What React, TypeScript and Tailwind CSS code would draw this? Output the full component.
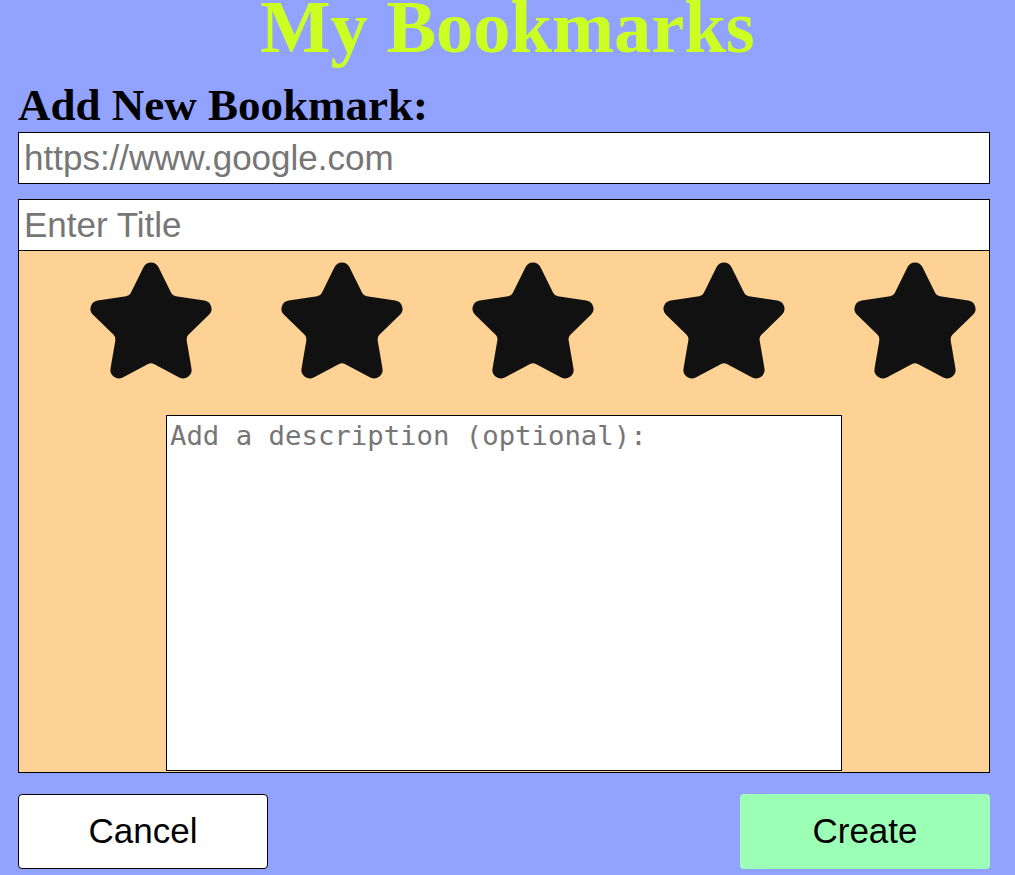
import React from "react";

const StarIcon = () => (
  <svg
    width="132"
    height="132"
    viewBox="0 0 24 24"
    fill="#111111"
    stroke="#111111"
    strokeWidth="2"
    strokeLinecap="round"
    strokeLinejoin="round"
    className="shrink-0"
  >
    <path d="M11.525 2.295a.53.53 0 0 1 .95 0l2.31 4.679a2.123 2.123 0 0 0 1.595 1.16l5.166.756a.53.53 0 0 1 .294.904l-3.736 3.638a2.123 2.123 0 0 0-.611 1.878l.882 5.14a.53.53 0 0 1-.771.56l-4.618-2.428a2.122 2.122 0 0 0-1.973 0L6.396 21.01a.53.53 0 0 1-.77-.56l.881-5.139a2.122 2.122 0 0 0-.611-1.879L2.16 9.795a.53.53 0 0 1 .294-.906l5.165-.755a2.122 2.122 0 0 0 1.597-1.16z" />
  </svg>
);

export default function App() {
  return (
    <div className="min-h-screen overflow-hidden bg-[#92a2ff]">
      <h1 className="text-center font-['Liberation_Serif',serif] text-[74.5px] font-bold leading-[54px] text-[#ccff22]">
        My Bookmarks
      </h1>
      <div className="ml-[18px] w-[972px]">
        <h2 className="mb-[4px] mt-[28px] font-['Liberation_Serif',serif] text-[45px] font-bold leading-[46px] text-black">
          Add New Bookmark:
        </h2>
        <input
          type="text"
          placeholder="https://www.google.com"
          className="block h-[52px] w-full border border-black bg-white px-[5px] font-['Liberation_Sans',sans-serif] text-[35px] text-black outline-none placeholder:text-[#767676]"
        />
        <input
          type="text"
          placeholder="Enter Title"
          className="mt-[15px] block h-[52px] w-full border border-black bg-white px-[5px] font-['Liberation_Sans',sans-serif] text-[35px] text-black outline-none placeholder:text-[#767676]"
        />
        <div className="h-[522px] border border-t-0 border-black bg-[#fed294]">
          <div className="flex gap-[59px] pl-[66px] pt-[6px]">
            <StarIcon />
            <StarIcon />
            <StarIcon />
            <StarIcon />
            <StarIcon />
          </div>
          <textarea
            placeholder="Add a description (optional):"
            className="ml-[147px] mt-[26px] block h-[356px] w-[676px] resize-none border border-black bg-white px-[3px] py-[2px] font-['DejaVu_Sans_Mono',monospace] text-[27.3px] leading-[36px] text-black outline-none placeholder:text-[#767676]"
          />
        </div>
        <div className="mt-[21px] flex justify-between">
          <button className="h-[75px] w-[250px] rounded-[4px] border border-black bg-white font-['Liberation_Sans',sans-serif] text-[35px] text-black">
            Cancel
          </button>
          <button className="h-[75px] w-[250px] rounded-[4px] bg-[#9cffb6] font-['Liberation_Sans',sans-serif] text-[35px] text-black">
            Create
          </button>
        </div>
      </div>
    </div>
  );
}
